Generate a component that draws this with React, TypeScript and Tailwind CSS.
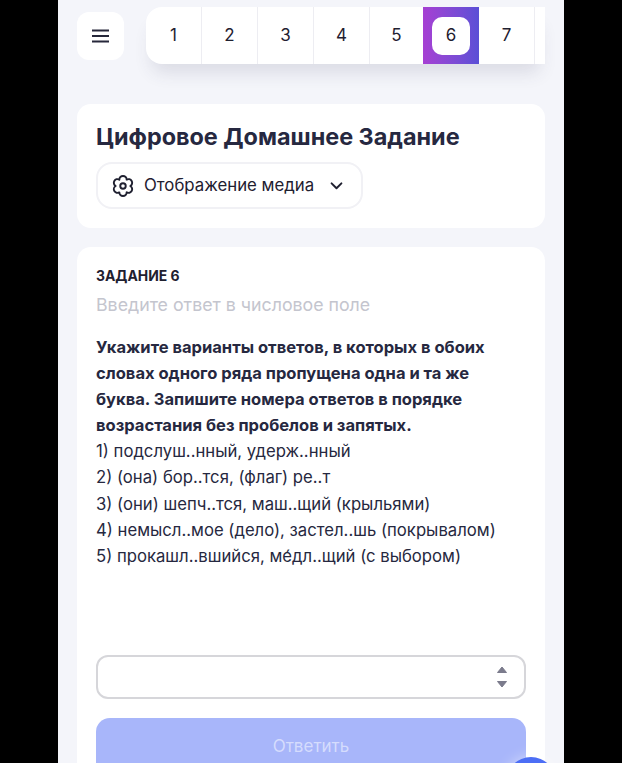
import React from "react";

const Flower = () => (
  <svg width="22" height="22" viewBox="0 0 24 24" fill="none" stroke="#1f2030" strokeWidth="2.100" strokeLinejoin="round">
    <path d="M8 5.070A4 4 0 0 1 16 5.070 4 4 0 0 1 20 12 4 4 0 0 1 16 18.930 4 4 0 0 1 8 18.930 4 4 0 0 1 4 12 4 4 0 0 1 8 5.070z" />
    <circle cx="12" cy="12" r="3" />
  </svg>
);

export default function App() {
  const cells = [
    { n: 1, w: "w-[56px]" },
    { n: 2, w: "w-[56px]" },
    { n: 3, w: "w-[56px]" },
    { n: 4, w: "w-[56px]" },
    { n: 5, w: "w-[53px]" },
  ];
  return (
    <div className="h-[763px] w-[622px] overflow-hidden bg-black flex justify-center" style={{ fontFamily: "Inter, 'Noto Sans', sans-serif" }}>
      <div className="relative w-[506px] h-[763px] overflow-hidden bg-[#f4f5fa] px-[19px] flex flex-col">
        <div className="flex items-start pt-[7px] shrink-0">
          <div className="mt-[5px] w-[47px] h-[48px] rounded-[12px] bg-white flex items-center justify-center shrink-0">
            <svg width="19" height="16" viewBox="0 0 19 16" fill="none" stroke="#26273a" strokeWidth="2.200">
              <path d="M1 2.500h17M1 8h17M1 13.500h17" />
            </svg>
          </div>
          <div className="ml-[22px] flex-1 h-[57px] rounded-l-[16px] bg-white overflow-hidden flex shadow-[0_14px_18px_-6px_rgba(60,60,90,0.14)]">
            {cells.map(({ n, w }) => (
              <div key={n} className={`${w} shrink-0 flex items-center justify-center text-[17px] text-[#1f2030] ${n < 5 ? "border-r border-[#ededf2]" : ""}`}>
                {n}
              </div>
            ))}
            <div className="w-[56px] shrink-0 bg-gradient-to-r from-[#a63fd3] to-[#5a4fd6] flex items-center justify-center">
              <div className="w-[38px] h-[38px] rounded-[10px] bg-white flex items-center justify-center text-[17px] text-[#1f2030]">6</div>
            </div>
            <div className="w-[56px] shrink-0 flex items-center justify-center text-[17px] text-[#1f2030] border-r border-[#ededf2]">7</div>
          </div>
        </div>

        <div className="mt-[40px] h-[124px] shrink-0 rounded-[14px] bg-white px-[19px] pt-[18px]">
          <h1 className="text-[23.400px] leading-[30px] font-bold text-[#262840] whitespace-nowrap">Цифровое Домашнее Задание</h1>
          <div className="mt-[10px] w-[267px] h-[47px] rounded-[16px] border-2 border-[#f1f1f5] flex items-center pl-[14px] text-[#1f2030]">
            <Flower />
            <span className="ml-[10px] text-[16.800px] whitespace-nowrap">Отображение медиа</span>
            <svg className="ml-[16px]" width="13" height="8" viewBox="0 0 14 9" fill="none" stroke="#1f2030" strokeWidth="2.200" strokeLinecap="round" strokeLinejoin="round">
              <path d="M1.500 1.500 7 7l5.500-5.500" />
            </svg>
          </div>
        </div>

        <div className="mt-[19px] flex-1 rounded-t-[14px] bg-white px-[19px] pt-[20px] flex flex-col">
          <div className="text-[13.900px] leading-[18px] font-bold text-[#1f2030]">ЗАДАНИЕ 6</div>
          <div className="mt-[8px] text-[17.750px] leading-[24px] text-[#c4c5ce] whitespace-nowrap">Введите ответ в числовое поле</div>
          <div className="mt-[17px] text-[16.700px] leading-[26.100px] text-[#262840]">
            <div className="text-[16.550px] font-bold whitespace-nowrap">Укажите варианты ответов, в которых в обоих</div>
            <div className="text-[16.550px] font-bold whitespace-nowrap">словах одного ряда пропущена одна и та же</div>
            <div className="text-[16.550px] font-bold whitespace-nowrap">буква. Запишите номера ответов в порядке</div>
            <div className="text-[16.550px] font-bold whitespace-nowrap">возрастания без пробелов и запятых.</div>
            <div className="whitespace-nowrap">1) подслуш..нный, удерж..нный</div>
            <div className="whitespace-nowrap">2) (она) бор..тся, (флаг) ре..т</div>
            <div className="whitespace-nowrap">3) (они) шепч..тся, маш..щий (крыльями)</div>
            <div className="whitespace-nowrap">4) немысл..мое (дело), застел..шь (покрывалом)</div>
            <div className="whitespace-nowrap">5) прокашл..вшийся, ме́дл..щий (с выбором)</div>
          </div>
          <div className="mt-[86px] h-[44px] rounded-[12px] border-2 border-[#d6d6da] flex items-center justify-end pr-[16px] shrink-0">
            <svg width="12" height="24" viewBox="0 0 12 24" fill="#7b7b8c" stroke="#7b7b8c" strokeWidth="1" strokeLinejoin="round">
              <path d="M6 2 10.500 7.500H1.500zM1.500 16.500h9L6 22z" />
            </svg>
          </div>
          <div className="mt-[19px] h-[70px] shrink-0 rounded-t-[14px] bg-[#a8b6fa] flex justify-center pt-[16px] text-[17px] leading-[24px] text-[#d5dcfd]">Ответить</div>
        </div>

        <div className="absolute left-[448px] top-[757px] w-[50px] h-[50px] rounded-full bg-[#4c6ef5] shadow-[0_0_14px_rgba(255,255,255,0.5)]" />
      </div>
    </div>
  );
}
